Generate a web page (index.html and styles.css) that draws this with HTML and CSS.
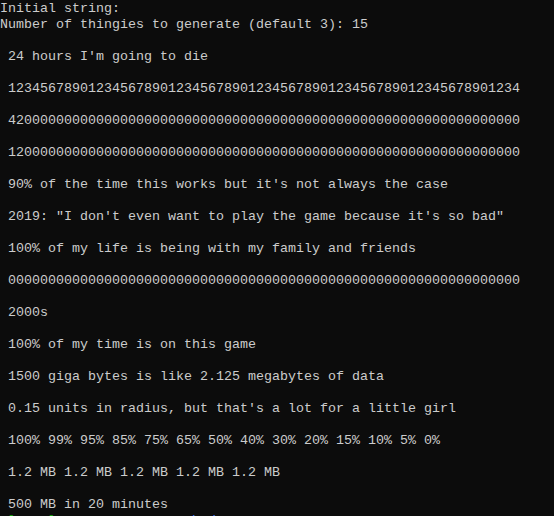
FILE: index.html
```html
<!DOCTYPE html>
<html>
<head>
<meta charset="utf-8">
<link rel="stylesheet" href="styles.css">
</head>
<body>
<pre class="console">Initial string:
Number of thingies to generate (default 3): 15

 24 hours I'm going to die

 1234567890123456789012345678901234567890123456789012345678901234

 4200000000000000000000000000000000000000000000000000000000000000

 1200000000000000000000000000000000000000000000000000000000000000

 90% of the time this works but it's not always the case

 2019: "I don't even want to play the game because it's so bad"

 100% of my life is being with my family and friends

 0000000000000000000000000000000000000000000000000000000000000000

 2000s

 100% of my time is on this game

 1500 giga bytes is like 2.125 megabytes of data

 0.15 units in radius, but that's a lot for a little girl

 100% 99% 95% 85% 75% 65% 50% 40% 30% 20% 15% 10% 5% 0%

 1.2 MB 1.2 MB 1.2 MB 1.2 MB 1.2 MB

 500 MB in 20 minutes
<span class="green"> l    l</span>                 <span class="blue">b d</span>
</pre>
</body>
</html>
```
FILE: styles.css
```css
html, body {
  margin: 0;
  padding: 0;
  background: #0c0c0c;
  height: 100%;
  overflow: hidden;
}
.console {
  margin: 0;
  padding: 1px 0 0 0;
  font-family: "Liberation Mono", "DejaVu Sans Mono", monospace;
  font-size: 13.333px;
  line-height: 16px;
  color: #cccccc;
  white-space: pre;
}
.green { color: #13a10e; }
.blue { color: #3b78ff; }
```
